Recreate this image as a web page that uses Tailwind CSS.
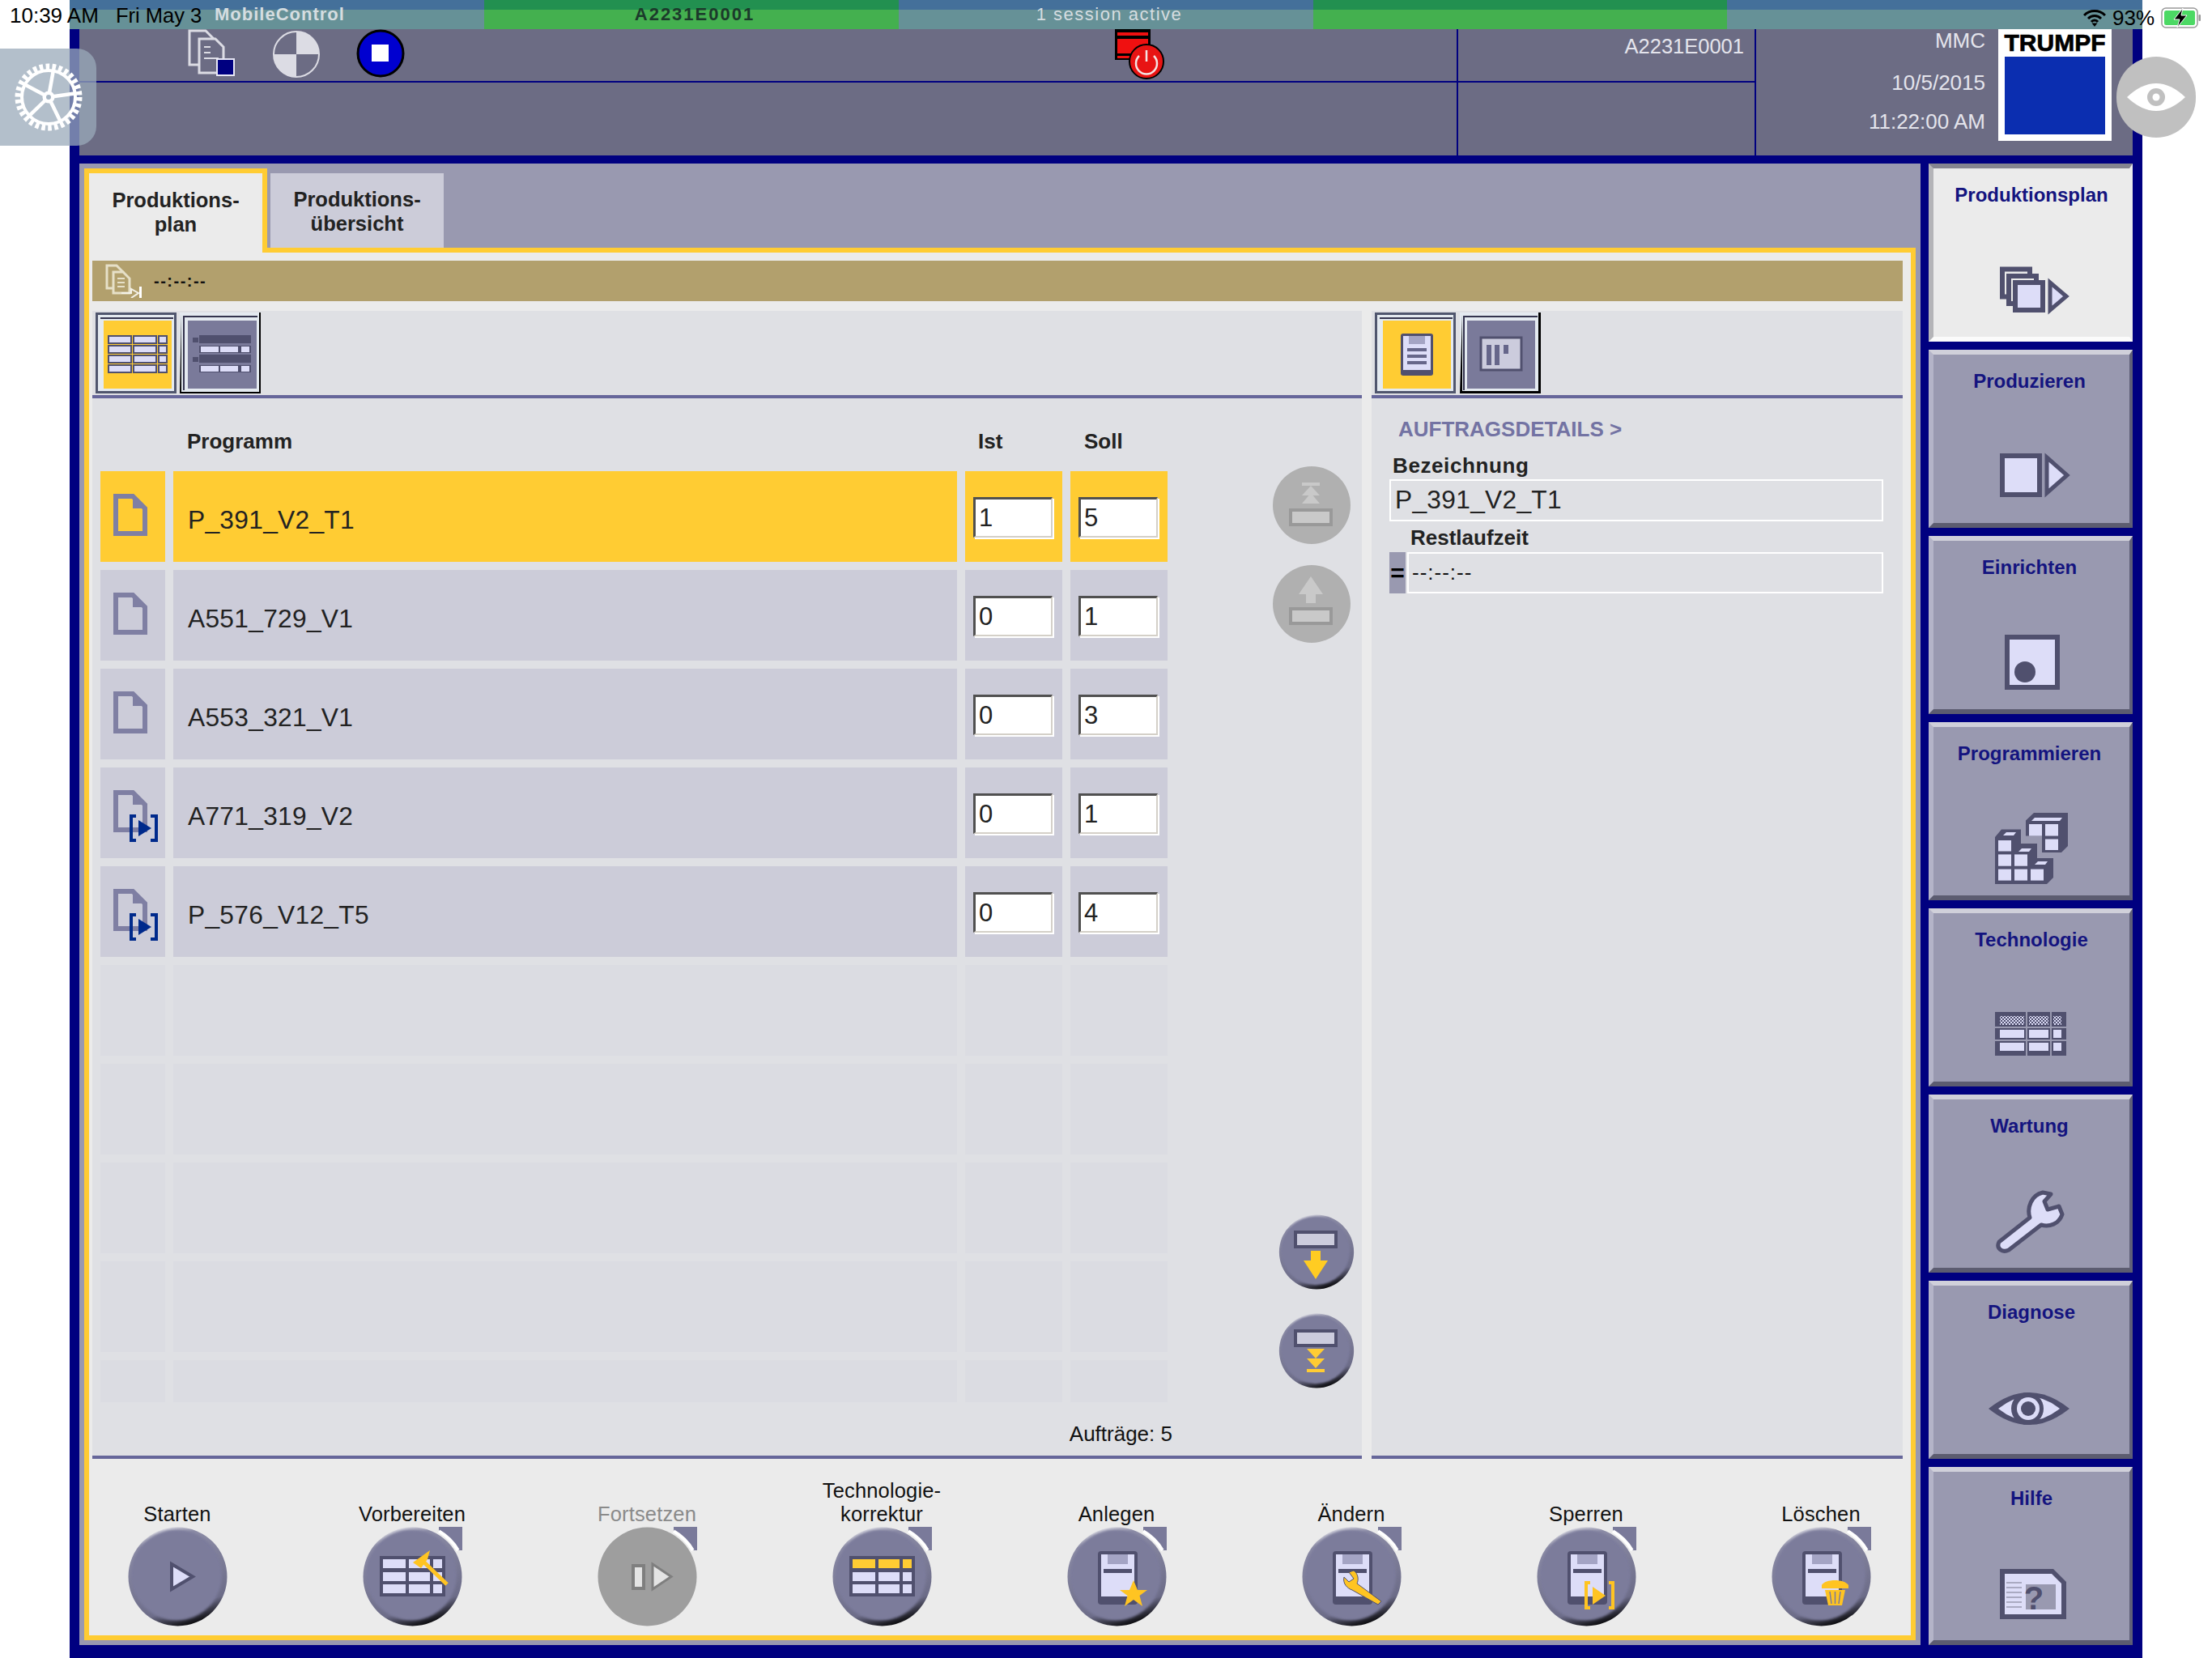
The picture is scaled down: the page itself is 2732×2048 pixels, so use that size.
<!DOCTYPE html>
<html lang="de">
<head>
  <meta charset="UTF-8">
  <title>MobileControl</title>
  <script src="https://cdn.jsdelivr.net/npm/@tailwindcss/browser@4"></script>
</head>
<body class="relative w-[2732px] h-[2048px] overflow-hidden bg-white font-['Liberation_Sans',sans-serif] text-[#111]">

  <!-- shared svg parts -->
  <svg class="absolute w-0 h-0">
    <defs>
      <linearGradient id="rim" x1="0.35" y1="0" x2="0.65" y2="1">
        <stop offset="0" stop-color="#e4e4ea"/>
        <stop offset="0.12" stop-color="#8c8ca6"/>
        <stop offset="0.8" stop-color="#6c6c88"/>
        <stop offset="1" stop-color="#000"/>
      </linearGradient>
      <filter id="soft"><feGaussianBlur stdDeviation="1.6"/></filter>
      <pattern id="hatch" width="4" height="4" patternUnits="userSpaceOnUse">
        <rect width="4" height="4" fill="#50506e"/>
        <rect width="2" height="2" fill="#ddddf8"/>
        <rect x="2" y="2" width="2" height="2" fill="#ddddf8"/>
      </pattern>
      <symbol id="round" viewBox="0 0 123 123">
        <circle cx="61.5" cy="61.5" r="61" fill="url(#rim)"/>
        <circle cx="60" cy="59.5" r="56" fill="#7b7b9b" filter="url(#soft)"/>
      </symbol>
      <symbol id="corner" viewBox="0 0 123 123">
        <path d="M94 0H123V29H117.8A65 65 0 0 0 94 5.2Z" fill="#7a7a9a"/>
        <path d="M94 5.2A65 65 0 0 1 117.8 29" fill="none" stroke="#fff" stroke-width="4"/>
      </symbol>
      <symbol id="clip" viewBox="0 0 123 123">
        <rect x="38" y="30" width="49" height="66" rx="4" fill="#50506e"/>
        <rect x="42" y="34" width="41" height="52" fill="#ddddf8"/>
        <rect x="50" y="34" width="25" height="12" fill="#a4a4c4"/>
        <rect x="45" y="52" width="35" height="5" fill="#50506e"/>
      </symbol>
      <symbol id="grid3" viewBox="0 0 123 123">
        <rect x="21" y="36" width="81" height="50" fill="#50506e"/>
        <g fill="#ddddf8">
          <rect x="25" y="40" width="28" height="11"/><rect x="57" y="40" width="26" height="11"/><rect x="87" y="40" width="11" height="11"/>
          <rect x="25" y="56" width="28" height="11"/><rect x="57" y="56" width="26" height="11"/><rect x="87" y="56" width="11" height="11"/>
          <rect x="25" y="71" width="28" height="11"/><rect x="57" y="71" width="26" height="11"/><rect x="87" y="71" width="11" height="11"/>
        </g>
      </symbol>
    </defs>
  </svg>

  <div class="absolute left-[86px] top-0 w-[2560px] h-[2048px] bg-[#000080] flex flex-col">

    <!-- status strip -->
    <div class="h-[36px] flex text-[22px] leading-[36px] text-center">
      <div class="w-[512px] bg-[linear-gradient(#44709a_12px,#669197_12px)] text-left pl-[179px] font-bold tracking-[1px] text-[#d5dde0]">MobileControl</div>
      <div class="w-[512px] pl-[8px] bg-[linear-gradient(#229050_12px,#44b04f_12px)] font-bold tracking-[2px] text-[#1b3a2b]">A2231E0001</div>
      <div class="w-[512px] pl-[8px] bg-[linear-gradient(#44709a_12px,#669197_12px)] tracking-[1.5px] text-[#d5dde0]">1 session active</div>
      <div class="w-[511px] bg-[linear-gradient(#229050_12px,#44b04f_12px)]"></div>
      <div class="w-[513px] bg-[linear-gradient(#44709a_12px,#669197_12px)]"></div>
    </div>

    <!-- machine header -->
    <div class="mx-[12px] h-[156px] bg-[#6c6c84] flex text-[#e4e4ec] text-[26px]">
      <div class="w-[1703px] flex flex-col border-r-2 border-[#000080]">
        <div class="h-[66px] border-b-2 border-[#000080] flex items-start">
          <svg class="ml-[134px]" width="58" height="58" viewBox="0 0 58 58">
            <path d="M2 2H22L32 12V44H2Z" fill="#6c6c84" stroke="#dcdce4" stroke-width="3"/>
            <path d="M14 12H34L44 22V54H14Z" fill="#6c6c84" stroke="#dcdce4" stroke-width="3"/>
            <path d="M20 22H28M20 29H28M20 36H38" stroke="#dcdce4" stroke-width="2"/>
            <rect x="36" y="37" width="21" height="20" fill="#000080" stroke="#e8e8f4" stroke-width="2"/>
          </svg>
          <svg class="ml-[46px]" width="60" height="60" viewBox="0 0 60 60">
            <circle cx="30" cy="31" r="28" fill="#6c6c84" stroke="#dcdce4" stroke-width="2"/>
            <path d="M30 31V3A28 28 0 0 1 58 31ZM30 31V59A28 28 0 0 1 2 31Z" fill="#dcdce4"/>
          </svg>
          <svg class="ml-[44px]" width="60" height="60" viewBox="0 0 60 60">
            <circle cx="30" cy="30" r="28" fill="#0000d0" stroke="#000" stroke-width="3"/>
            <rect x="19" y="19" width="21" height="21" fill="#fff"/>
          </svg>
          <svg class="ml-[876px]" width="62" height="62" viewBox="0 0 62 62">
            <rect x="1" y="0" width="44" height="38" fill="#000"/>
            <rect x="4" y="4" width="38" height="4" fill="#f01010"/>
            <rect x="4" y="12" width="38" height="18" fill="#f01010"/>
            <rect x="4" y="33" width="20" height="3" fill="#f01010"/>
            <circle cx="40" cy="40" r="21" fill="#e81414" stroke="#000" stroke-width="2"/>
            <path d="M31 33A13 13 0 1 0 49 33M40 26V40" fill="none" stroke="#f4e4e4" stroke-width="2.5"/>
          </svg>
        </div>
      </div>
      <div class="w-[368px] flex flex-col border-r-2 border-[#000080]">
        <div class="h-[66px] border-b-2 border-[#000080] text-right pr-[13px] pt-[7px] leading-[28px] text-[25.5px]">A2231E0001</div>
      </div>
      <div class="flex-1 flex">
        <div class="w-[283px] text-right leading-[28px]">
          <p class="mt-[0px]">MMC</p>
          <p class="mt-[24px]">10/5/2015</p>
          <p class="mt-[20px]">11:22:00 AM</p>
        </div>
        <div class="ml-[16px] w-[140px] h-[138px] bg-white flex flex-col items-center">
          <span class="font-bold text-[30px] leading-[34px] text-black [-webkit-text-stroke:0.7px_black]">TRUMPF</span>
          <div class="w-[124px] h-[96px] bg-[#0b2eb0]"></div>
        </div>
      </div>
    </div>

    <!-- main area -->
    <div class="mx-[12px] mt-[10px] flex gap-[10px] h-[1830px]">

      <div class="w-[2274px] h-full bg-[#9999b0] p-[6px] flex flex-col">
        <!-- tabs -->
        <div class="h-[98px] flex items-start text-[25.5px] leading-[30px] font-bold text-center text-[#222]">
          <div class="relative z-10 w-[226px] h-[104px] pb-[2px] border-x-[6px] border-t-[6px] border-[#ffcc33] bg-[#ebebeb] flex items-center justify-center">Produktions-<br>plan</div>
          <div class="ml-[4px] mt-[6px] w-[214px] h-[92px] pt-[2px] bg-[#ccccd9] flex items-center justify-center">Produktions-<br>übersicht</div>
        </div>

        <!-- tab panel -->
        <div class="flex-1 border-[6px] border-[#ffcc33] bg-[#ebebeb] flex flex-col">
          <div class="mx-[4px] w-[2236px] mt-[10px] h-[50px] bg-[#b2a06d] flex items-center">
            <svg class="ml-[16px]" width="46" height="42" viewBox="0 0 46 42">
              <path d="M2 2H14L22 10V30H2Z" fill="#b2a06d" stroke="#e6e0c8" stroke-width="3"/>
              <path d="M10 10H22L30 18V36H10Z" fill="#b2a06d" stroke="#e6e0c8" stroke-width="3"/>
              <path d="M15 18H24M15 23H24M15 28H24" stroke="#e6e0c8" stroke-width="2"/>
              <path d="M20 36H32V31L41 36L32 42" fill="none" stroke="#f4f2e8" stroke-width="2"/>
              <rect x="42" y="28" width="3" height="14" fill="#fff"/>
            </svg>
            <span class="ml-[14px] text-[20px] tracking-[1.5px] font-bold">--:--:--</span>
          </div>

          <div class="mx-[4px] mt-[12px] h-[1418px] flex gap-[12px]">
            <!-- program list -->
            <div class="w-[1568px] h-full bg-[#dfe0e4] flex flex-col border-b-4 border-[#66669a]">
              <div class="h-[108px] border-b-4 border-[#66669a] pl-[4px] pt-[2px] flex gap-[4px]">
                <svg width="100" height="100" viewBox="0 0 100 100">
                  <rect width="100" height="100" fill="#50566e"/>
                  <rect x="3" y="3" width="94" height="94" fill="#e4eaf0"/>
                  <rect x="6" y="6" width="90" height="2" fill="#34344e"/>
                  <rect x="10" y="10" width="84" height="84" fill="#ffcc33"/>
                  <g id="t-rows" fill="#50506e">
                    <rect x="15" y="28" width="30" height="11"/><rect x="46" y="28" width="30" height="11"/><rect x="77" y="28" width="12" height="11"/>
                    <rect x="15" y="40" width="30" height="11"/><rect x="46" y="40" width="30" height="11"/><rect x="77" y="40" width="12" height="11"/>
                    <rect x="15" y="52" width="30" height="11"/><rect x="46" y="52" width="30" height="11"/><rect x="77" y="52" width="12" height="11"/>
                    <rect x="15" y="64" width="30" height="11"/><rect x="46" y="64" width="30" height="11"/><rect x="77" y="64" width="12" height="11"/>
                  </g>
                  <g fill="#ddddf8">
                    <rect x="17" y="30" width="26" height="7"/><rect x="48" y="30" width="26" height="7"/><rect x="79" y="30" width="8" height="7"/>
                    <rect x="17" y="42" width="26" height="7"/><rect x="48" y="42" width="26" height="7"/><rect x="79" y="42" width="8" height="7"/>
                    <rect x="17" y="54" width="26" height="7"/><rect x="48" y="54" width="26" height="7"/><rect x="79" y="54" width="8" height="7"/>
                    <rect x="17" y="66" width="26" height="7"/><rect x="48" y="66" width="26" height="7"/><rect x="79" y="66" width="8" height="7"/>
                  </g>
                </svg>
                <svg width="100" height="100" viewBox="0 0 100 100">
                  <rect width="100" height="100" fill="#e4eaf0"/>
                  <path d="M0 100H100V0H98V98H2V2" fill="#000"/>
                  <rect x="4" y="4" width="2" height="92" fill="#34344e"/>
                  <rect x="4" y="4" width="92" height="2" fill="#34344e"/>
                  <rect x="10" y="10" width="85" height="84" fill="#7a7a9a"/>
                  <g fill="#50506e">
                    <rect x="16" y="31" width="7" height="6"/><rect x="24" y="28" width="64" height="10"/>
                    <rect x="24" y="41" width="64" height="9"/>
                    <rect x="16" y="55" width="7" height="6"/><rect x="24" y="52" width="64" height="10"/>
                    <rect x="24" y="65" width="64" height="9"/>
                  </g>
                  <g fill="#ddddf8">
                    <rect x="26" y="42" width="22" height="7"/><rect x="50" y="42" width="22" height="7"/><rect x="76" y="42" width="10" height="7"/>
                    <rect x="26" y="66" width="22" height="7"/><rect x="50" y="66" width="22" height="7"/><rect x="76" y="66" width="10" height="7"/>
                  </g>
                </svg>
              </div>

              <div class="flex flex-1">
                <div class="w-[1332px] pl-[10px]">
                  <div class="h-[90px] pt-[39px] grid grid-cols-[80px_968px_120px_120px] gap-x-[10px] text-[26px] leading-[28px] font-bold text-[#222]">
                    <span></span>
                    <span class="pl-[17px]">Programm</span>
                    <span class="pl-[16px]">Ist</span>
                    <span class="pl-[17px]">Soll</span>
                  </div>
                  <div id="rows" class="grid grid-cols-[80px_968px_120px_120px] gap-[10px]"></div>
                  <p class="mt-[24px] text-right text-[26px] leading-[30px] -mr-[2px]">Aufträge: 5</p>
                </div>

                <!-- move buttons -->
                <div class="ml-[126px] flex flex-col items-start">
                  <svg class="mt-[84px]" width="96" height="96" viewBox="0 0 96 96">
                    <circle cx="48" cy="48" r="48" fill="#b0b0b0"/>
                    <rect x="22" y="54" width="50" height="18" fill="#c9c9c9" stroke="#999" stroke-width="4"/>
                    <path d="M36 20H58V24H36ZM47 24L58 36H36ZM47 33L58 46H36Z" fill="#c9c9c9"/>
                  </svg>
                  <svg class="mt-[26px]" width="96" height="96" viewBox="0 0 96 96">
                    <circle cx="48" cy="48" r="48" fill="#b0b0b0"/>
                    <rect x="22" y="54" width="50" height="18" fill="#c9c9c9" stroke="#999" stroke-width="4"/>
                    <path d="M47 14L62 36H53V47H41V36H32Z" fill="#c9c9c9"/>
                  </svg>
                  <svg class="mt-[706px] ml-[6px]" width="96" height="93" viewBox="0 0 96 93">
                    <use href="#round" width="96" height="93"/>
                    <rect x="22" y="22" width="50" height="18" fill="#ccccdd" stroke="#50506e" stroke-width="4"/>
                    <path d="M41 45H53V57H62L47 80L32 57H41Z" fill="#ffcc22"/>
                  </svg>
                  <svg class="mt-[29px] ml-[6px]" width="96" height="93" viewBox="0 0 96 93">
                    <use href="#round" width="96" height="93"/>
                    <rect x="22" y="22" width="50" height="18" fill="#ccccdd" stroke="#50506e" stroke-width="4"/>
                    <path d="M36 44H58L47 56ZM36 56H58L47 68ZM36 69H58V73H36Z" fill="#ffcc33"/>
                  </svg>
                </div>
              </div>
            </div>

            <!-- order details -->
            <div class="w-[656px] h-full bg-[#dfe0e4] flex flex-col border-b-4 border-[#66669a]">
              <div class="h-[108px] border-b-4 border-[#66669a] pl-[4px] pt-[2px] flex gap-[5px]">
                <svg width="100" height="100" viewBox="0 0 100 100">
                  <rect width="100" height="100" fill="#50566e"/>
                  <rect x="3" y="3" width="94" height="94" fill="#e4eaf0"/>
                  <rect x="6" y="6" width="90" height="2" fill="#34344e"/>
                  <rect x="10" y="10" width="84" height="84" fill="#ffcc33"/>
                  <rect x="32" y="26" width="40" height="52" rx="3" fill="#50506e"/>
                  <rect x="35" y="29" width="34" height="42" fill="#ddddf8"/>
                  <rect x="42" y="29" width="20" height="10" fill="#a4a4c4"/>
                  <path d="M40 44H64V48H40ZM40 52H64V56H40ZM40 60H64V64H40Z" fill="#66668a"/>
                </svg>
                <svg width="100" height="100" viewBox="0 0 100 100">
                  <rect width="100" height="100" fill="#e4eaf0"/>
                  <path d="M0 100H100V0H97V97H3V3" fill="#000"/>
                  <rect x="4" y="4" width="2" height="92" fill="#34344e"/>
                  <rect x="4" y="4" width="92" height="2" fill="#34344e"/>
                  <rect x="9" y="10" width="84" height="84" fill="#7a7a9a"/>
                  <rect x="26" y="31" width="50" height="40" fill="#ccccdd" stroke="#50506e" stroke-width="3"/>
                  <path d="M33 40H39V65H33ZM43 40H49V65H43ZM54 40H60V51H54Z" fill="#66668a"/>
                </svg>
              </div>
              <div class="pl-[22px]">
                <p class="mt-[24px] pl-[11px] text-[26px] leading-[28px] font-bold text-[#7373a3]">AUFTRAGSDETAILS &gt;</p>
                <p class="mt-[17px] pl-[4px] text-[26px] leading-[28px] font-bold tracking-[0.6px] text-[#222]">Bezeichnung</p>
                <div class="mt-[3px] w-[610px] h-[52px] border-2 border-white pl-[5px] flex items-center text-[31.7px] tracking-[0.3px] text-[#222]">P_391_V2_T1</div>
                <p class="mt-[6px] pl-[26px] text-[26px] leading-[28px] font-bold text-[#222]">Restlaufzeit</p>
                <div class="mt-[4px] flex gap-[2px] h-[51px]">
                  <div class="w-[20px] bg-[#9999b0] flex items-center justify-center text-[30px] font-bold text-black">=</div>
                  <div class="w-[588px] border-2 border-white pl-[4px] flex items-center text-[26px] tracking-[1px]">--:--:--</div>
                </div>
              </div>
            </div>
          </div>

          <!-- action buttons -->
          <div class="flex-1 pl-[36px] w-[2212px] pb-[11px] flex justify-between items-end text-[25.5px] leading-[29px] tracking-[0.15px] text-center">
            <div class="w-[146px] flex flex-col items-center">
              <span>Starten</span>
              <svg class="mt-[1px]" width="123" height="123" viewBox="0 0 123 123">
                <use href="#round" width="123" height="123"/>
                <path d="M54 46L80 61.5L54 77Z" fill="#ddddf8" stroke="#50506e" stroke-width="4"/>
              </svg>
            </div>
            <div class="w-[146px] flex flex-col items-center">
              <span>Vorbereiten</span>
              <svg class="mt-[1px]" width="123" height="123" viewBox="0 0 123 123">
                <use href="#corner" width="123" height="123"/>
                <use href="#round" width="123" height="123"/>
                <use href="#grid3" width="123" height="123"/>
                <path d="M76 44L104 71" stroke="#ffc422" stroke-width="5"/>
                <path d="M83 29L62 44L72 51L80 40Z" fill="#ffc422"/>
              </svg>
            </div>
            <div class="w-[146px] flex flex-col items-center text-[#8a8a8a]">
              <span>Fortsetzen</span>
              <svg class="mt-[1px]" width="123" height="123" viewBox="0 0 123 123">
                <use href="#corner" width="123" height="123"/>
                <circle cx="61.5" cy="61.5" r="61" fill="#9e9e9e"/>
                <rect x="44" y="48" width="13" height="28" fill="#e4e4e4" stroke="#7f7f7f" stroke-width="4"/>
                <path d="M68 46L91 61.5L68 77Z" fill="#e4e4e4" stroke="#7f7f7f" stroke-width="3"/>
              </svg>
            </div>
            <div class="w-[146px] flex flex-col items-center">
              <span>Technologie-<br>korrektur</span>
              <svg class="mt-[1px]" width="123" height="123" viewBox="0 0 123 123">
                <use href="#corner" width="123" height="123"/>
                <use href="#round" width="123" height="123"/>
                <use href="#grid3" width="123" height="123"/>
                <path d="M25 40H53V51H25ZM57 40H83V51H57ZM87 40H98V51H87Z" fill="#ffcc33"/>
              </svg>
            </div>
            <div class="w-[146px] flex flex-col items-center">
              <span>Anlegen</span>
              <svg class="mt-[1px]" width="123" height="123" viewBox="0 0 123 123">
                <use href="#corner" width="123" height="123"/>
                <use href="#round" width="123" height="123"/>
                <use href="#clip" width="123" height="123"/>
                <path d="M82 66L87 78H99L89.500 85L93 98L82 90L71 98L74.500 85L65 78H77Z" fill="#ffc422"/>
              </svg>
            </div>
            <div class="w-[146px] flex flex-col items-center">
              <span>Ändern</span>
              <svg class="mt-[1px]" width="123" height="123" viewBox="0 0 123 123">
                <use href="#corner" width="123" height="123"/>
                <use href="#round" width="123" height="123"/>
                <use href="#clip" width="123" height="123"/>
                <path d="M58 56L64 54C70 58 70 66 68 70L98 92L94 96L62 78C56 76 50 70 52 62L58 68L64 64Z" fill="#ffc422" stroke="#50506e" stroke-width="1"/>
              </svg>
            </div>
            <div class="w-[146px] flex flex-col items-center">
              <span>Sperren</span>
              <svg class="mt-[1px]" width="123" height="123" viewBox="0 0 123 123">
                <use href="#corner" width="123" height="123"/>
                <use href="#round" width="123" height="123"/>
                <use href="#clip" width="123" height="123"/>
                <path d="M66 69H61V100H66M89 69H94V100H89" fill="none" stroke="#ffc422" stroke-width="4"/>
                <path d="M69 74L85 85L69 96Z" fill="#ffc422"/>
              </svg>
            </div>
            <div class="w-[146px] flex flex-col items-center">
              <span>Löschen</span>
              <svg class="mt-[1px]" width="123" height="123" viewBox="0 0 123 123">
                <use href="#corner" width="123" height="123"/>
                <use href="#round" width="123" height="123"/>
                <use href="#clip" width="123" height="123"/>
                <path d="M62 72C66 64 90 64 95 72V76H62ZM66 78H91L87 97H70Z" fill="#ffc422"/>
                <path d="M72 80L74 95M78.500 80V95M85 80L83 95" stroke="#7b7b9b" stroke-width="1.500"/>
              </svg>
            </div>
          </div>
        </div>
      </div>

      <!-- right navigation -->
      <nav class="w-[252px] flex flex-col gap-[10px] text-[24px] leading-[28px] font-bold text-center text-[#14147f]">
        <div class="h-[220px] border-t-[6px] border-l-[6px] border-r-[4px] border-b-[6px] border-t-[#858590] border-l-[#b4b4b8] border-r-[#ebebeb] border-b-[#fbfbfb] bg-[#ebebeb] flex flex-col items-center">
          <span class="mt-[19px]">Produktionsplan</span>
          <svg class="mt-[59px] overflow-visible" width="100" height="90" viewBox="0 0 100 90">
            <g fill="#ebebeb" stroke="#50506e" stroke-width="6">
              <rect x="14" y="18.500" width="34" height="34"/>
              <rect x="22" y="27" width="34" height="34"/>
              <rect x="30" y="35" width="34" height="34" fill="#ddddf8"/>
            </g>
            <path d="M73 35L93 52L73 69Z" fill="#ddddf8" stroke="#50506e" stroke-width="5"/>
          </svg>
        </div>
        <div class="h-[220px] border-t-[6px] border-l-[6px] border-r-[4px] border-b-[6px] border-t-[#d0d0da] border-l-[#b4b4c8] border-r-[#606078] border-b-[#5c5c70] bg-[#9999b0] flex flex-col items-center">
          <span class="mt-[19px] mr-[5px]">Produzieren</span>
          <svg class="mt-[59px] overflow-visible" width="100" height="90" viewBox="0 0 100 90">
            <rect x="14" y="19" width="46" height="48" fill="#ddddf8" stroke="#50506e" stroke-width="6"/>
            <path d="M69 21L94 43L69 65Z" fill="#ddddf8" stroke="#50506e" stroke-width="5"/>
          </svg>
        </div>
        <div class="h-[220px] border-t-[6px] border-l-[6px] border-r-[4px] border-b-[6px] border-t-[#d0d0da] border-l-[#b4b4c8] border-r-[#606078] border-b-[#5c5c70] bg-[#9999b0] flex flex-col items-center">
          <span class="mt-[19px] mr-[5px]">Einrichten</span>
          <svg class="mt-[59px] overflow-visible" width="100" height="90" viewBox="0 0 100 90">
            <rect x="20" y="13" width="62" height="62" fill="#ddddf8" stroke="#50506e" stroke-width="6"/>
            <circle cx="42" cy="56" r="13" fill="#50506e"/>
          </svg>
        </div>
        <div class="h-[220px] border-t-[6px] border-l-[6px] border-r-[4px] border-b-[6px] border-t-[#d0d0da] border-l-[#b4b4c8] border-r-[#606078] border-b-[#5c5c70] bg-[#9999b0] flex flex-col items-center">
          <span class="mt-[19px] mr-[5px]">Programmieren</span>
          <svg class="mt-[59px] overflow-visible" width="100" height="90" viewBox="0 0 100 90">
            <path d="M5 30L13 20.600H37V38H57V56H77V80L69 88H5Z" fill="#50506e"/>
            <path d="M43 9.500L53 0H95V41L87 49H63V28.500H43Z" fill="#50506e"/>
            <g fill="#ddddf8">
              <rect x="9" y="34" width="16" height="13.500"/><rect x="9" y="51.400" width="16" height="14.300"/><rect x="9" y="69.600" width="16" height="14"/>
              <rect x="29" y="51.400" width="16" height="14.300"/><rect x="29" y="69.600" width="16" height="14"/><rect x="49" y="69.600" width="16" height="14"/>
              <rect x="47" y="14" width="16" height="14.500"/><rect x="67" y="14" width="16" height="14.500"/><rect x="67" y="32.500" width="16" height="13.500"/>
              <path d="M15 28L19 24H31L28 28ZM34 48L38 44H50L47 48ZM54 64L58 60H70L67 64ZM50 10L54 6H88L85 10Z"/>
            </g>
          </svg>
        </div>
        <div class="h-[220px] border-t-[6px] border-l-[6px] border-r-[4px] border-b-[6px] border-t-[#d0d0da] border-l-[#b4b4c8] border-r-[#606078] border-b-[#5c5c70] bg-[#9999b0] flex flex-col items-center">
          <span class="mt-[19px]">Technologie</span>
          <svg class="mt-[59px] overflow-visible" width="100" height="90" viewBox="0 0 100 90">
            <g fill="#50506e">
              <rect x="5" y="16" width="38" height="18"/><rect x="45" y="16" width="28" height="18"/><rect x="75" y="16" width="18" height="18"/>
              <rect x="5" y="36" width="38" height="14"/><rect x="45" y="36" width="28" height="14"/><rect x="75" y="36" width="18" height="14"/>
              <rect x="5" y="52" width="38" height="18"/><rect x="45" y="52" width="28" height="18"/><rect x="75" y="52" width="18" height="18"/>
            </g>
            <g fill="url(#hatch)">
              <rect x="11" y="21" width="30" height="11"/><rect x="47" y="21" width="24" height="11"/><rect x="77" y="21" width="10" height="11"/>
            </g>
            <g fill="#ddddf8">
              <rect x="11" y="38" width="30" height="10"/><rect x="47" y="38" width="24" height="10"/><rect x="77" y="38" width="10" height="10"/>
              <rect x="11" y="54" width="30" height="10"/><rect x="47" y="54" width="24" height="10"/><rect x="77" y="54" width="10" height="10"/>
            </g>
          </svg>
        </div>
        <div class="h-[220px] border-t-[6px] border-l-[6px] border-r-[4px] border-b-[6px] border-t-[#d0d0da] border-l-[#b4b4c8] border-r-[#606078] border-b-[#5c5c70] bg-[#9999b0] flex flex-col items-center">
          <span class="mt-[19px] mr-[5px]">Wartung</span>
          <svg class="mt-[59px] overflow-visible" width="100" height="90" viewBox="0 0 100 90">
            <path d="M10 70L48 40C44 28 50 12 64 9L74 11L66 20L70 30L84 26L88 36C84 48 72 52 62 49L22 80C14 84 6 78 10 70Z" fill="#ddddf8" stroke="#50506e" stroke-width="5" stroke-linejoin="round"/>
          </svg>
        </div>
        <div class="h-[220px] border-t-[6px] border-l-[6px] border-r-[4px] border-b-[6px] border-t-[#d0d0da] border-l-[#b4b4c8] border-r-[#606078] border-b-[#5c5c70] bg-[#9999b0] flex flex-col items-center">
          <span class="mt-[19px]">Diagnose</span>
          <svg class="mt-[59px] overflow-visible" width="100" height="90" viewBox="0 0 100 90">
            <path d="M-3 46Q47 6 97 46Q47 86 -3 46Z" fill="#50506e"/>
            <path d="M9 46Q47 16 85 46Q47 76 9 46Z" fill="#ddddf8"/>
            <circle cx="45" cy="46" r="20" fill="#50506e"/>
            <circle cx="46" cy="46" r="14" fill="#ddddf8"/>
            <circle cx="46" cy="46" r="9" fill="#50506e"/>
          </svg>
        </div>
        <div class="h-[220px] border-t-[6px] border-l-[6px] border-r-[4px] border-b-[6px] border-t-[#d0d0da] border-l-[#b4b4c8] border-r-[#606078] border-b-[#5c5c70] bg-[#9999b0] flex flex-col items-center">
          <span class="mt-[19px]">Hilfe</span>
          <svg class="mt-[59px] overflow-visible" width="100" height="90" viewBox="0 0 100 90">
            <path d="M11 14H77L93 30V76H11Z" fill="#50506e"/>
            <path d="M17 20H75L87 32V70H17Z" fill="#ddddf8"/>
            <rect x="43" y="33" width="37" height="31" fill="#9999b0"/>
            <path d="M19 31H38M19 37H38M19 43H38M19 49H38M19 55H38M19 61H38" stroke="#9999b0" stroke-width="1.500"/>
            <text x="53" y="64" text-anchor="middle" font-family="Liberation Sans" font-weight="700" font-size="40" fill="#50506e">?</text>
          </svg>
        </div>
      </nav>
    </div>
  </div>

  <!-- device status bar -->
  <span class="absolute left-[12px] top-[4px] text-[26px] leading-[30px] text-black">10:39 AM</span>
  <span class="absolute left-[143px] top-[4px] text-[25.5px] leading-[30px] text-black">Fri May 3</span>
  <div class="absolute left-[2573px] top-[7px] flex items-center gap-[8px]">
    <svg width="28" height="22" viewBox="0 0 28 22">
      <path d="M1 8A18 18 0 0 1 27 8M6 12A11 11 0 0 1 22 12M10 16A5 5 0 0 1 18 16" fill="none" stroke="#000" stroke-width="3"/>
      <path d="M14 22L10.500 17.500H17.500Z"/>
    </svg>
    <span class="text-[26px] leading-[30px] text-black">93%</span>
    <svg width="50" height="26" viewBox="0 0 50 26">
      <rect x="1" y="1" width="44" height="24" rx="5" fill="#fff" stroke="#999" stroke-width="1.500"/>
      <rect x="4" y="4" width="38" height="18" rx="2.500" fill="#4cd964"/>
      <rect x="46.500" y="9" width="2.500" height="8" rx="1" fill="#999"/>
      <path d="M27 1L16 15H23L20 25L32 10H25Z" fill="#000" stroke="#fff" stroke-width="1"/>
    </svg>
  </div>

  <!-- assistive touch -->
  <div class="absolute left-0 top-[60px] w-[119px] h-[120px] rounded-r-[24px] bg-[#99aab9]/75 flex items-center justify-center">
    <svg width="86" height="86" viewBox="-43 -43 86 86">
      <circle r="37" fill="none" stroke="#fff" stroke-width="9" stroke-dasharray="4.500 3.260"/>
      <circle r="33" fill="none" stroke="#fff" stroke-width="4"/>
      <path d="M0 0L5.600 -31.500M0 0L31.700 -4.500M0 0L14 28.800M0 0L-23 22.200M0 0L-28.300 -15" stroke="#fff" stroke-width="4.500"/>
      <circle r="7.500" fill="#fff"/>
      <circle r="3" fill="#a8b6c4"/>
    </svg>
  </div>

  <!-- eye overlay -->
  <div class="absolute left-[2614px] top-[70px] w-[98px] h-[100px] rounded-full bg-[#c0c0c0] flex items-center justify-center">
    <svg width="72" height="34" viewBox="0 0 72 34">
      <path d="M0 17Q36 -17 72 17Q36 51 0 17Z" fill="#fff"/>
      <circle cx="36" cy="17" r="11" fill="#c0c0c0"/>
      <circle cx="36" cy="17" r="4.500" fill="#fff"/>
    </svg>
  </div>

  <script>
    const programme = [
      ['P_391_V2_T1', 1, 5, false],
      ['A551_729_V1', 0, 1, false],
      ['A553_321_V1', 0, 3, false],
      ['A771_319_V2', 0, 1, true],
      ['P_576_V12_T5', 0, 4, true]
    ];
    const seite = (fertig) => `
      <svg width="80" height="112" viewBox="0 0 80 112">
        <path d="M19 31H40L55 46V77H19Z" fill="none" stroke="#7f7fa3" stroke-width="6"/>
        <path d="M40 28L58 46H40Z" fill="#7f7fa3"/>
        ${fertig ? `<path d="M44 60H38V90H44M62 60H69V90H62" fill="none" stroke="#002a8c" stroke-width="4"/><path d="M47 65L63 75L47 85Z" fill="#002a8c"/>` : ''}
      </svg>`;
    const feld = (wert) => `<input value="${wert}" class="w-[98px] h-[50px] bg-white border-t-[3px] border-l-[3px] border-r-2 border-b-2 border-t-[#505050] border-l-[#505050] border-r-[#d4d0c8] border-b-[#d4d0c8] shadow-[2px_2px_0_#fff] pl-[4px] text-[31px] leading-[40px] text-[#222] outline-none">`;

    let html = '';
    programme.forEach((p, i) => {
      const bg = i === 0 ? 'bg-[#ffcc33]' : 'bg-[#ccccd9]';
      html += `
        <div class="h-[112px] ${bg}">${seite(p[3])}</div>
        <div class="h-[112px] ${bg} pl-[18px] pt-[10px] flex items-center text-[31.7px] tracking-[0.3px] text-[#222]">${p[0]}</div>
        <div class="h-[112px] ${bg} pl-[10px] pt-[32px]">${feld(p[1])}</div>
        <div class="h-[112px] ${bg} pl-[10px] pt-[32px]">${feld(p[2])}</div>`;
    });
    [112, 112, 112, 112, 52].forEach(h => {
      const cl = h === 112 ? 'h-[112px] bg-[#dbdce2]' : 'h-[52px] bg-[#dbdce2]';
      html += `<div class="${cl}"></div><div class="${cl}"></div><div class="${cl}"></div><div class="${cl}"></div>`;
    });
    document.getElementById('rows').innerHTML = html;
  </script>
</body>
</html>
